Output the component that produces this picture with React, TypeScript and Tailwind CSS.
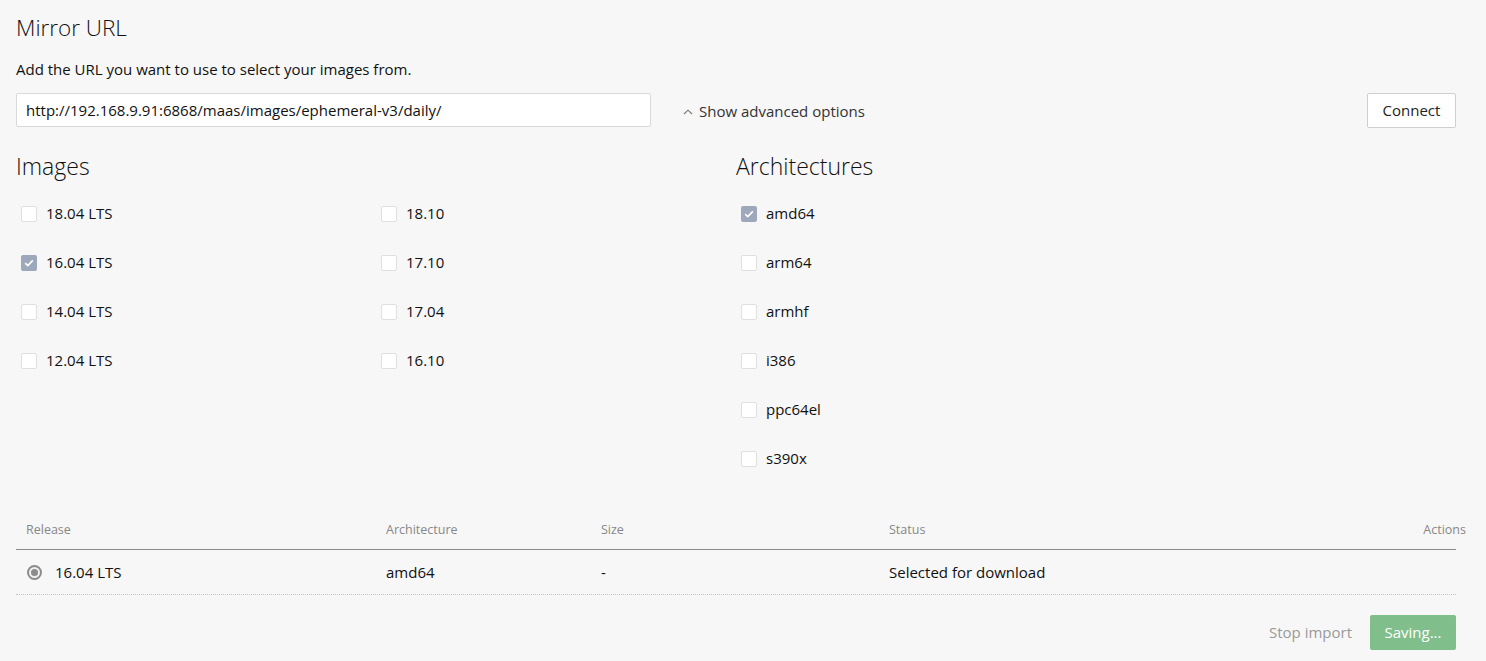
import React from "react";

const font = { fontFamily: '"Open Sans", "Noto Sans", sans-serif' };

function Check({ label, checked }: { label: string; checked?: boolean }) {
  return (
    <div className="flex h-[49px] items-center">
      <div className="ml-[5px] flex h-[16px] w-[16px] items-center justify-center">
        {checked ? (
          <div className="flex h-[16px] w-[16px] items-center justify-center rounded-[2px] bg-[#9ea8bc]">
            <svg width="10" height="8" viewBox="0 0 10 8" fill="none">
              <path d="M1.2 4.2 L3.8 6.6 L8.8 1.4" stroke="#fff" strokeWidth="1.6" />
            </svg>
          </div>
        ) : (
          <div className="h-[16px] w-[16px] rounded-[2px] border border-[#e0e0e0] bg-white" />
        )}
      </div>
      <span className="ml-[9px] text-[15px] text-[#111]">{label}</span>
    </div>
  );
}

export default function App() {
  return (
    <div className="min-h-[661px] w-[1486px] bg-[#f7f7f7] text-[#111]" style={font}>
      <div className="w-[1456px] pl-[16px]">
        <h1 className="pt-[13px] text-[22.5px] font-light leading-[30px] text-[#111]">Mirror URL</h1>
        <p className="mt-[16px] text-[15px] leading-[20px]">Add the URL you want to use to select your images from.</p>
        <div className="mt-[14px] flex items-start">
          <div className="flex h-[34px] w-[635px] items-center rounded-[2px] border border-[#d9d9d9] bg-white pl-[9px] text-[15px]">
            http://192.168.9.91:6868/maas/images/ephemeral-v3/daily/
          </div>
          <div className="ml-[32px] flex h-[34px] items-center pt-[3px] text-[15px] text-[#333]">
            <svg width="10" height="6" viewBox="0 0 10 6" fill="none" className="mr-[6px]">
              <path d="M1 5 L5 1.2 L9 5" stroke="#777" strokeWidth="1.1" />
            </svg>
            Show advanced options
          </div>
          <div className="ml-auto flex h-[35px] w-[89px] items-center justify-center rounded-[2px] border border-[#cfcfcf] bg-white text-[15px] text-[#222]">
            Connect
          </div>
        </div>

        <div className="mt-[23px] grid grid-cols-[720px_720px]">
          <div>
            <h2 className="text-[23px] font-light leading-[30px]">Images</h2>
            <div className="mt-[8px] grid grid-cols-[360px_360px]">
              <div>
                <Check label="18.04 LTS" />
                <Check label="16.04 LTS" checked />
                <Check label="14.04 LTS" />
                <Check label="12.04 LTS" />
              </div>
              <div>
                <Check label="18.10" />
                <Check label="17.10" />
                <Check label="17.04" />
                <Check label="16.10" />
              </div>
            </div>
          </div>
          <div>
            <h2 className="text-[23px] font-light leading-[30px]">Architectures</h2>
            <div className="mt-[8px]">
              <Check label="amd64" checked />
              <Check label="arm64" />
              <Check label="armhf" />
              <Check label="i386" />
              <Check label="ppc64el" />
              <Check label="s390x" />
            </div>
          </div>
        </div>

        <div className="mt-[27px]">
          <div className="flex h-[40px] items-center border-b border-[#8a8a8a] pt-[2px] text-[12.5px] text-[#888]">
            <div className="w-[360px] pl-[10px]">Release</div>
            <div className="w-[215px] pl-[10px]">Architecture</div>
            <div className="w-[288px] pl-[10px]">Size</div>
            <div className="flex-1 pl-[10px]">Status</div>
            <div className="mr-[-10px]">Actions</div>
          </div>
          <div className="flex h-[45px] items-center border-b border-dotted border-[#c4c4c4] text-[15px]">
            <div className="flex w-[360px] items-center pl-[11px]">
              <div className="flex h-[15px] w-[15px] items-center justify-center rounded-full border-[2px] border-[#8c8c8c] bg-[#f0f0f0]">
                <div className="h-[7px] w-[7px] rounded-full bg-[#8c8c8c]" />
              </div>
              <span className="ml-[13px]">16.04 LTS</span>
            </div>
            <div className="w-[215px] pl-[10px]">amd64</div>
            <div className="w-[288px] pl-[10px]">-</div>
            <div className="flex-1 pl-[10px]">Selected for download</div>
          </div>
        </div>

        <div className="mt-[20px] flex items-center justify-end">
          <span className="text-[15px] text-[#999]">Stop import</span>
          <div className="ml-[18px] flex h-[35px] w-[86px] items-center justify-center rounded-[2px] bg-[#80bf8c] text-[15px] text-white">
            Saving...
          </div>
        </div>
      </div>
    </div>
  );
}
